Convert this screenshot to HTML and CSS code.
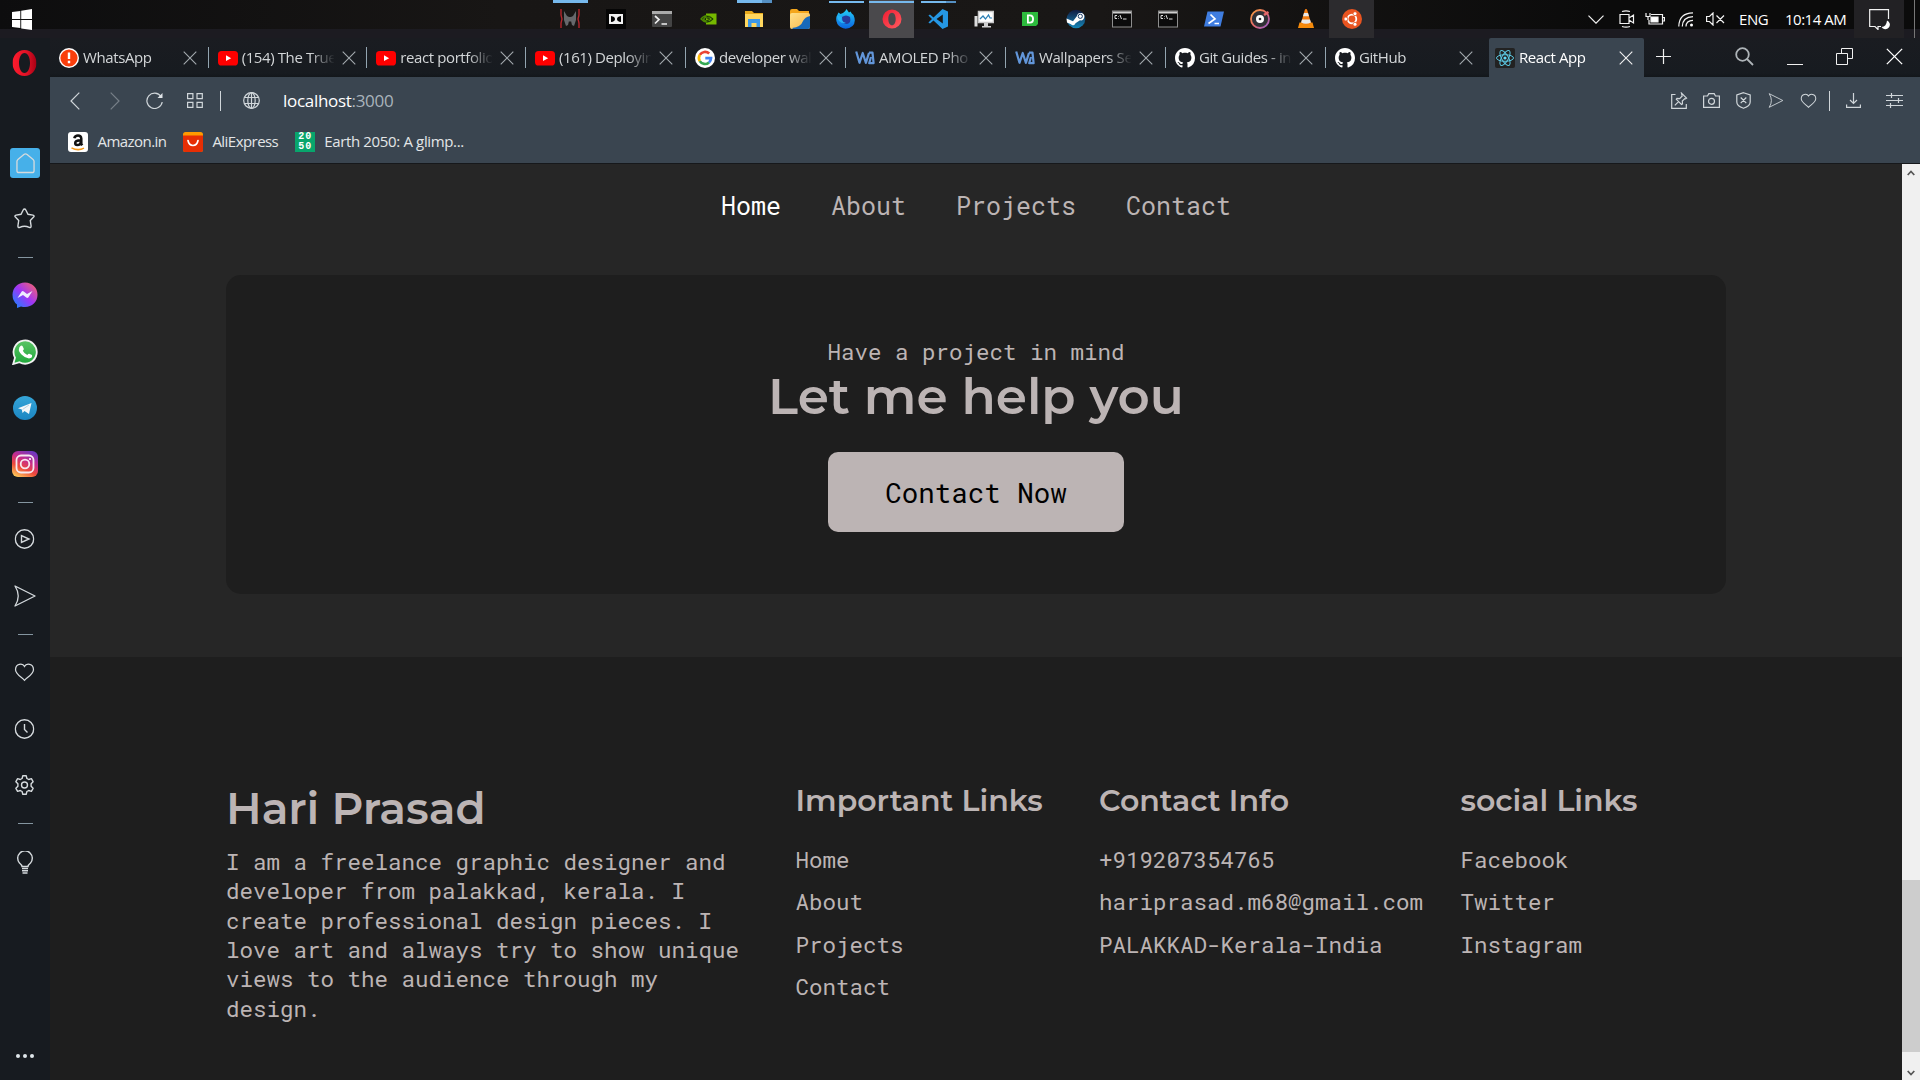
FILE: index.html
```html
<!DOCTYPE html>
<html lang="en">
<head>
<meta charset="utf-8">
<title>React App</title>
<link rel="stylesheet" href="styles.css">
</head>
<body>
<svg class="defs" aria-hidden="true">
  <defs>
    <linearGradient id="gMsg" x1="0" y1="1" x2="1" y2="0"><stop offset="0" stop-color="#0a8cff"/><stop offset=".5" stop-color="#a035f5"/><stop offset="1" stop-color="#ff6a5c"/></linearGradient>
    <linearGradient id="gWa" x1="0" y1="0" x2="0" y2="1"><stop offset="0" stop-color="#5bc466"/><stop offset="1" stop-color="#1fa83a"/></linearGradient>
    <linearGradient id="gTg" x1="0" y1="0" x2="0" y2="1"><stop offset="0" stop-color="#35a5d8"/><stop offset="1" stop-color="#1c86c2"/></linearGradient>
    <linearGradient id="gIg" x1=".2" y1="1" x2=".7" y2="0"><stop offset="0" stop-color="#fdc95a"/><stop offset=".35" stop-color="#ee4a3a"/><stop offset=".65" stop-color="#c52c8c"/><stop offset="1" stop-color="#7038c0"/></linearGradient>
    <linearGradient id="gOpera" x1="0" y1="0" x2="1" y2="0"><stop offset="0" stop-color="#ff1b2d"/><stop offset=".6" stop-color="#e01226"/><stop offset="1" stop-color="#a70014"/></linearGradient>
    <linearGradient id="gOperaTask" x1="0" y1="0" x2="1" y2="1"><stop offset="0" stop-color="#f01c32"/><stop offset="1" stop-color="#ff5c60"/></linearGradient>
    <linearGradient id="gFire" x1="0" y1="0" x2="0" y2="1"><stop offset="0" stop-color="#25d0f8"/><stop offset="1" stop-color="#0a63e0"/></linearGradient>
    <linearGradient id="gSteam" x1="0" y1="0" x2="0" y2="1"><stop offset="0" stop-color="#101a40"/><stop offset="1" stop-color="#1587b8"/></linearGradient>
    <linearGradient id="gDisc" x1="0" y1="0" x2="1" y2="1"><stop offset="0" stop-color="#f6a03c"/><stop offset=".5" stop-color="#e5696b"/><stop offset="1" stop-color="#8f5bd0"/></linearGradient>
    <linearGradient id="gFold" x1="0" y1="0" x2="1" y2="1"><stop offset="0" stop-color="#ffe08a"/><stop offset="1" stop-color="#f7b64a"/></linearGradient>
  </defs>
  <symbol id="close" viewBox="0 0 14 14"><path d="M.7.7 13.3 13.3M13.3.7.7 13.3" fill="none" stroke="currentColor" stroke-width="1.1"/></symbol>
  <symbol id="yt" viewBox="0 0 20 20"><rect y="3" width="20" height="14.5" rx="3.6" fill="#f00"/><path d="M8 7.3v5.8l5.2-2.9z" fill="#fff"/></symbol>
  <symbol id="wabyss" viewBox="0 0 20 20"><path d="M1.200 3.500 4.500 14.800 7.700 5 10.900 14.800 14 4.800M14 4.600h3.500L18.600 15.200H14.200L16 9" fill="none" stroke="#6296da" stroke-width="2.200" stroke-linejoin="round"/></symbol>
  <symbol id="github" viewBox="0 0 16 16"><path fill="#fff" d="M8 0C3.58 0 0 3.58 0 8c0 3.54 2.29 6.53 5.47 7.59.4.07.55-.17.55-.38 0-.19-.01-.82-.01-1.49-2.01.37-2.53-.49-2.69-.94-.09-.23-.48-.94-.82-1.13-.28-.15-.68-.52-.01-.53.63-.01 1.08.58 1.23.82.72 1.21 1.87.87 2.33.66.07-.52.28-.87.51-1.07-1.78-.2-3.64-.89-3.64-3.95 0-.87.31-1.59.82-2.15-.08-.2-.36-1.02.08-2.12 0 0 .67-.21 2.2.82.64-.18 1.32-.27 2-.27s1.36.09 2 .27c1.53-1.04 2.2-.82 2.2-.82.44 1.1.16 1.92.08 2.12.51.56.82 1.27.82 2.15 0 3.07-1.87 3.75-3.65 3.95.29.25.54.73.54 1.48 0 1.07-.01 1.93-.01 2.2 0 .21.15.46.55.38A8.01 8.01 0 0 0 16 8c0-4.42-3.58-8-8-8z"/></symbol>
  <symbol id="heart" viewBox="0 0 22 22"><path d="M11 4.6C9 .9 1.6 1.600 1.600 8c0 4.700 7 8.300 9.400 11.200C13.400 16.300 20.400 12.700 20.400 8 20.400 1.600 13 .9 11 4.600z" fill="none" stroke="currentColor" stroke-width="1.300"/></symbol>
  <symbol id="plane" viewBox="0 0 22 22"><path d="M1 1 21 11 1 21Q7.500 11 1 1z" fill="none" stroke="currentColor" stroke-width="1.300" stroke-linejoin="round"/></symbol>
  <symbol id="cmd" viewBox="0 0 20 20"><rect x=".5" y="2" width="19" height="16" fill="#0b0b0b" stroke="#8d8d8d"/><path d="M1 3.500h18" stroke="#cfcfcf" stroke-width="2"/><path d="M5 6.500H3v3h2M6.500 7v.6M6.500 9v.6M8 6l1.500 4M11 10h3.500" stroke="#ddd" fill="none"/></symbol>
</svg>

<header class="taskbar">
  <svg class="winlogo" viewBox="0 0 20 21"><path fill="#fff" d="M0 3 8.300 1.900V9.900H0zM9.200 1.700 20 0V9.900H9.200zM0 10.900H8.300V19.100L0 18zM9.200 10.900H20V21L9.200 19.400z"/></svg>
  <ul class="tasks">
    <li class="task open"><svg viewBox="0 0 20 20"><path d="M1 0v6l1 4-1 4v5M19 0v6l-1 4 1 4v5" stroke="#b3262c" stroke-width="1.400" fill="none"/><path d="M4 2l3 5 2 1h2l2-1 3-5v9l-2 6-2-1-1-4-1 1-1-1-1 4-2 1-2-6z" fill="#66686b"/></svg></li>
    <li class="task"><svg viewBox="0 0 20 20"><rect width="20" height="20" fill="#050505"/><path fill-rule="evenodd" fill="#f2f2f2" d="M3 5h14v10H3zM5 7v6q4-.5 4-3T5 7zM15 7v6q-4-.5-4-3t4-3z"/></svg></li>
    <li class="task"><svg viewBox="0 0 20 20"><rect y="2" width="20" height="16" rx="1" fill="#444"/><path d="M0 2h20v3H0z" fill="#aaa"/><path d="M3 7l4 3.500-4 4M9.500 15h5.500" stroke="#eee" stroke-width="1.700" fill="none"/></svg></li>
    <li class="task"><svg viewBox="0 0 20 20"><path d="M8 4.500h10.500v11H8z" fill="#76b900"/><path d="M3 10q5-6.500 12 0-6 6.500-12 0zM5.500 10.200q3-4 6.500 0-3 3.500-6.500 0z" fill="none" stroke="#4d8a00" stroke-width="1.300"/><path d="M8.500 7.400q4 0 6.500 2.600-3 3-6.500 3M8.500 9q2 0 3 1-1 1.500-3 1.500" fill="none" stroke="#1c3604" stroke-width="1"/></svg></li>
    <li class="task open stacked"><svg viewBox="0 0 20 20"><path d="M1 2h7l2 2h9v14H1z" fill="#e7a91c"/><path d="M1 5h18v13H1z" fill="#ffd75e"/><path d="M4 10h12v8h-3.500v-4h-5v4H4z" fill="#3b98e8"/></svg></li>
    <li class="task"><svg viewBox="0 0 20 20"><path d="M0 2q0-2 2-2h5l2 2h10v5H0z" fill="#f4a61d"/><rect y="4" width="20" height="16" rx="2" fill="url(#gFold)"/><path d="M2 19q9-1 11-7 2-4 7-5v11q0 2-2 2H3z" fill="#1769ba"/></svg></li>
    <li class="task open lower"><svg viewBox="0 0 20 20"><path d="M10.500 0q1.500 2 2.500 3.500l1.500-1q1 2 3 3.500 3 7-1 11-6 5-12 1-5.500-4-4-10.500L2.500 3.500 4.500 5 7 4q2.500-1.500 3.500-4z" fill="url(#gFire)"/><path d="M6 8q4-3 8 0 1.500 6-3 7-5 0-5-7z" fill="#273a9c"/><path d="M1 7q1 8 9 7-6-2-4-6L3 7z" fill="#27b4f5"/></svg></li>
    <li class="task open lower current"><svg viewBox="0 0 20 20"><path fill-rule="evenodd" fill="url(#gOperaTask)" d="M10 .5a9.500 9.500 0 1 0 0 19 9.500 9.500 0 0 0 0-19zm0 3.200c2.300 0 3.700 2.900 3.700 6.300s-1.400 6.300-3.700 6.300S6.300 13.400 6.300 10 7.700 3.700 10 3.700z"/></svg></li>
    <li class="task open lower stacked"><svg viewBox="0 0 20 20"><path d="M14.500 0 20 2.500v15L14.500 20 5.500 11.500 2 14.500.4 13.500 4 10 .4 6.500 2 5.500l3.500 3zM14.800 5.500 8.500 10l6.300 4.500z" fill="#2597e3" fill-rule="evenodd"/></svg></li>
    <li class="task"><svg viewBox="0 0 20 20"><path d="M4.500 2.500h15v11h-15z" fill="#fff" stroke="#c9c9c9" stroke-width="1.500"/><path d="M10 14h4v3h3v1.500H8V17h2z" fill="#cfcfcf"/><path d="M.5 7h3v10.500h-3z" fill="#dcdcdc"/><path d="M6 10l3-3 2.500 3 3-4 1.500 3h2" fill="none" stroke="#2a7fb5" stroke-width="1.200"/></svg></li>
    <li class="task"><svg viewBox="0 0 20 20"><path d="M2 3h16v12l-2 2H2z" fill="#2dbb3d"/><path fill-rule="evenodd" d="M7 5.500h3q4 0 4 4.500t-4 4.500H7zM8.800 7.300v5.400h1q2.300 0 2.300-2.700t-2.300-2.700z" fill="#fff"/></svg></li>
    <li class="task"><svg viewBox="0 0 20 20"><circle cx="10" cy="10" r="9.300" fill="url(#gSteam)"/><path d="M.5 9.500 7 12.300l4-5.300a3.700 3.700 0 1 1 3 4.300l-4.500 3a2.600 2.600 0 0 1-4.500 1L1 13.500z" fill="#fff"/><circle cx="14.300" cy="7.300" r="2.100" fill="none" stroke="#173a66"/></svg></li>
    <li class="task"><svg viewBox="0 0 20 20"><use href="#cmd"/></svg></li>
    <li class="task"><svg viewBox="0 0 20 20"><use href="#cmd"/></svg></li>
    <li class="task"><svg viewBox="0 0 20 20"><path d="M3.500 2.500H20L16.500 17.500H0z" fill="#3f7de0"/><path d="M6.500 5.500 11 10l-6.500 4.500M10.500 14.500h4.500" stroke="#fff" stroke-width="1.700" fill="none"/></svg></li>
    <li class="task"><svg viewBox="0 0 20 20"><circle cx="10" cy="10" r="9" fill="#303036" stroke="url(#gDisc)" stroke-width="1.800"/><circle cx="10" cy="10" r="4" fill="#fff"/><circle cx="10" cy="10" r="1.300" fill="#303036"/><path d="M14 6l4.500-3" stroke="#e5696b" stroke-width="2.400"/></svg></li>
    <li class="task"><svg viewBox="0 0 20 20"><path d="M3.500 13.500h13l1.500 5.500H2z" fill="#f58a0b"/><path d="M10 0q1 0 1.300 1.200L15 14q-5 3-10 0L8.700 1.200Q9 0 10 0z" fill="#f47e12"/><path d="M8 4h4l1 3.300H7zM6 10.500h8l.9 3q-4.900 2.500-9.800 0z" fill="#e9e9e9"/></svg></li>
    <li class="task idle"><svg viewBox="0 0 20 20"><circle cx="10" cy="10" r="10" fill="#e95420"/><circle cx="10" cy="10" r="4.300" fill="none" stroke="#fff" stroke-width="1.800"/><g fill="#fff" stroke="#e95420" stroke-width=".8"><circle cx="3.900" cy="10" r="2"/><circle cx="13" cy="4.700" r="2"/><circle cx="13" cy="15.300" r="2"/></g></svg></li>
  </ul>
  <div class="tray">
    <svg class="t-chev" viewBox="0 0 16 9"><path d="M.5.7 8 8.200 15.500.7"/></svg>
    <svg class="t-meet" viewBox="0 0 16 18"><path d="M1 4.500h9v9H1zM10 8l4.500-3v8L10 10M3 1.500Q7 .2 11 1.500M3 16.500q4 1.300 8 0"/></svg>
    <svg class="t-bat" viewBox="0 0 20 13"><path d="M6 2.500h11.500v9.500H4V8M18 5.500h1.400v3.500H18M1 1v3.500h4V1M3 4.500V8"/><path d="M6 5h7v5H6z" fill="#fff"/></svg>
    <svg class="t-wifi" viewBox="0 0 16 15"><path d="M.8 14.500Q1 1 15 .8M4.300 14.500Q4.500 5 15 4.600M8 14.500Q8 8.500 15 8.300"/><circle cx="13.500" cy="13" r="1.500" fill="#fff" stroke="none"/></svg>
    <svg class="t-vol" viewBox="0 0 19 14"><path d="M.6 4.500h2.900L7 1v12L3.500 9.500H.6zM10.500 3.500l7.500 7.500M18 3.500 10.500 11"/></svg>
    <span class="lang">ENG</span>
    <span class="clock">10:14 AM</span>
    <span class="notif"><svg viewBox="0 0 21 21"><path d="M12 17.500H9v3L6 17.500H.7V.7H19.500V10"/><path d="M18 11.500a4.500 4.500 0 1 1-5.500 6.500q5-.5 5.500-6.500z" fill="#fff" stroke="none"/></svg></span>
    <i class="peek"></i>
  </div>
</header>

<div class="browser">
  <aside class="sidebar">
    <svg class="opera" viewBox="0 0 24 26"><path fill-rule="evenodd" fill="url(#gOpera)" d="M12 0C5 0 0 5.700 0 13s5 13 12 13 12-5.700 12-13S19 0 12 0zm0 3c3.400 0 5.500 4.600 5.500 10S15.400 23 12 23s-5.500-4.600-5.500-10S8.600 3 12 3z"/></svg>
    <span class="speed"><svg viewBox="0 0 20 22"><path d="M8.300 1.500 2 6.700Q1 7.500 1 9v9.500Q1 20.500 3 20.500h14q2 0 2-2V9q0-1.500-1-2.300L11.700 1.500Q10 .3 8.300 1.500z"/></svg></span>
    <svg class="si star" viewBox="0 0 22 21"><path d="M11 1q.8 0 1.300 1L14.500 6.300l4.900.8q2 .6.700 2L16.800 12.500l.8 5.500q0 2-1.900 1.400Q11 17 6.300 19.400q-1.900.6-1.900-1.400l.8-5.500L1.900 9.100q-1.300-1.400.7-2L7.500 6.300 9.700 2Q10.200 1 11 1z"/></svg>
    <i class="rule"></i>
    <svg class="si msg" viewBox="0 0 26 26"><path d="M13 .5c7 0 12.500 5.200 12.500 12.200S20 25 13 25q-2 0-4-.6L5 26v-3.500Q.5 19 .5 12.700C.5 5.700 6 .5 13 .5z" fill="url(#gMsg)" stroke="none"/><path d="M5.500 16 9.700 9.500q1-.8 2 0l3.300 2.400 5.500-3L16.300 15.500q-1 .8-2 0L11 13z" fill="#eef" stroke="none"/></svg>
    <svg class="si wa" viewBox="0 0 26 26"><path d="M1.200 25 3 18.700A11.600 11.600 0 1 1 7.500 23.200z" fill="url(#gWa)" stroke="#f2f2f2" stroke-width="1.800"/><path d="M8.500 7q1-1 2 0l1.300 2.800q.2.800-1 2 1.500 3 4.500 4.300 1.200-1.700 2-1.300l2.700 1.300q.8 3-3 3.500-4-.3-7.500-4T7 10q0-2 1.500-3z" fill="#fff" stroke="none"/></svg>
    <svg class="si tg" viewBox="0 0 24 24"><circle cx="12" cy="12" r="12" fill="url(#gTg)" stroke="none"/><path d="M5 12.300 18.500 7 16 18l-4.500-3-2 2-.7-3.500z" fill="#f4f7f9" stroke="none"/><path d="M9.500 13.500 16 9" stroke="#a9c9dc" stroke-width=".8"/></svg>
    <svg class="si ig" viewBox="0 0 26 26"><rect width="26" height="26" rx="6" fill="url(#gIg)" stroke="none"/><rect x="4.500" y="4.500" width="17" height="17" rx="4.500" stroke="#f6e9f0" stroke-width="1.800"/><circle cx="13" cy="13" r="4.300" stroke="#f6e9f0" stroke-width="1.800"/><circle cx="18" cy="8" r="1.100" fill="#fff" stroke="none"/></svg>
    <i class="rule r2"></i>
    <svg class="si play" viewBox="0 0 20 20"><circle cx="10" cy="10" r="9.200"/><path d="M7 6.500v7l7.500-3.500z"/></svg>
    <svg class="si send"><use href="#plane"/></svg>
    <i class="rule r3"></i>
    <svg class="si hrt"><use href="#heart"/></svg>
    <svg class="si clk" viewBox="0 0 20 20"><circle cx="10" cy="10" r="9.200"/><path d="M10 5v5.500l3 3"/></svg>
    <svg class="si gear" viewBox="0 0 20 20"><circle cx="10" cy="10" r="3"/><path d="M8.300.8h3.400l.7 2.700 1.800 1 2.700-.8 1.700 3-2 2v2.600l2 2-1.700 3-2.700-.8-1.800 1-.7 2.700H8.300l-.7-2.700-1.800-1-2.700.8-1.700-3 2-2V8.700l-2-2 1.700-3 2.700.8 1.800-1z" stroke-linejoin="round"/></svg>
    <i class="rule r4"></i>
    <svg class="si bulb" viewBox="0 0 18 24"><path d="M6 15.500Q6 14 3.500 12A7.300 7.300 0 1 1 14.500 12Q12 14 12 15.500z"/><path d="M6 17.500h6M6 19.700h6M6.500 22h5" stroke-width="1.400"/></svg>
    <span class="dots"><i></i><i></i><i></i></span>
  </aside>

  <div class="window">
    <div class="tabs">
      <div class="tab narrow"><svg class="fav" viewBox="0 0 20 20"><circle cx="10" cy="10" r="10" fill="#fff"/><circle cx="10" cy="10" r="8.600" fill="#fa3e0c"/><path d="M8.800 4.500h2.400v6.500H8.800zM8.800 12.800h2.400v2.400H8.800z" fill="#fff"/></svg><span class="name">WhatsApp</span><svg class="x"><use href="#close"/></svg></div>
      <div class="tab narrow"><svg class="fav"><use href="#yt"/></svg><span class="name">(154) The True</span><svg class="x"><use href="#close"/></svg></div>
      <div class="tab narrow"><svg class="fav"><use href="#yt"/></svg><span class="name">react portfolio</span><svg class="x"><use href="#close"/></svg></div>
      <div class="tab"><svg class="fav"><use href="#yt"/></svg><span class="name">(161) Deployin</span><svg class="x"><use href="#close"/></svg></div>
      <div class="tab"><svg class="fav" viewBox="0 0 20 20"><circle cx="10" cy="10" r="10" fill="#fff"/><g fill="none" stroke-width="2.700"><path d="M14.200 5.600A6.100 6.100 0 0 0 4.800 6.900" stroke="#ea4335"/><path d="M4.800 6.900a6.100 6.100 0 0 0 0 6.200" stroke="#fbbc05"/><path d="M4.800 13.100a6.100 6.100 0 0 0 9.200 1.400" stroke="#34a853"/><path d="M14 14.500a6.100 6.100 0 0 0 2-4.300h-5.700" stroke="#4285f4"/></g></svg><span class="name">developer wal</span><svg class="x"><use href="#close"/></svg></div>
      <div class="tab"><svg class="fav"><use href="#wabyss"/></svg><span class="name">AMOLED Pho</span><svg class="x"><use href="#close"/></svg></div>
      <div class="tab"><svg class="fav"><use href="#wabyss"/></svg><span class="name">Wallpapers Se</span><svg class="x"><use href="#close"/></svg></div>
      <div class="tab"><svg class="fav"><use href="#github"/></svg><span class="name">Git Guides - in</span><svg class="x"><use href="#close"/></svg></div>
      <div class="tab last"><svg class="fav"><use href="#github"/></svg><span class="name">GitHub</span><svg class="x"><use href="#close"/></svg></div>
      <div class="tab active"><svg class="fav" viewBox="0 0 20 20"><rect width="20" height="20" rx="2" fill="#222"/><g fill="none" stroke="#5cc9e4"><ellipse cx="10" cy="10" rx="8.500" ry="3.300"/><ellipse cx="10" cy="10" rx="8.500" ry="3.300" transform="rotate(60 10 10)"/><ellipse cx="10" cy="10" rx="8.500" ry="3.300" transform="rotate(120 10 10)"/></g><circle cx="10" cy="10" r="1.600" fill="#61dafb"/></svg><span class="name">React App</span><svg class="x"><use href="#close"/></svg></div>
      <svg class="plus" viewBox="0 0 15 15"><path d="M7.500 0v15M0 7.500h15"/></svg>
      <div class="controls">
        <svg class="c-search" viewBox="0 0 19 19"><circle cx="7.500" cy="7.500" r="6.300"/><path d="M12 12l6 6"/></svg>
        <svg class="c-min" viewBox="0 0 16 16"><path d="M0 15.500h16"/></svg>
        <svg class="c-max" viewBox="0 0 17 17"><path d="M.5 5.500h11v11H.500zM5.500 5.500V.500h11v10h-5"/></svg>
        <svg class="c-close"><use href="#close"/></svg>
      </div>
    </div>

    <div class="toolbar">
      <svg class="back" viewBox="0 0 10 18"><path d="M9.300.7 1 9l8.300 8.300"/></svg>
      <svg class="fwd" viewBox="0 0 10 18"><path d="M.7.7 9 9 .7 17.300"/></svg>
      <svg class="reload" viewBox="0 0 17 17"><path d="M15 4.500A7.700 7.700 0 1 0 16.200 10"/><path d="M16.500 1v5h-5z" fill="#dfe4e7" stroke="none"/></svg>
      <svg class="grid" viewBox="0 0 16 15"><path d="M.6.6h5.300v5H.6zM10 .6h5.300v5H10zM.6 9.400h5.300v5H.6zM10 9.400h5.300v5H10z"/></svg>
      <i class="bar"></i>
      <svg class="globe" viewBox="0 0 17 17"><circle cx="8.500" cy="8.500" r="7.800"/><ellipse cx="8.500" cy="8.500" rx="3.700" ry="7.800"/><path d="M1.500 5.500h14M1.500 11.500h14M8.500.5v16"/></svg>
      <span class="url">localhost<span class="port">:3000</span></span>
      <div class="actions">
        <svg class="a-pin" viewBox="0 0 17 17"><path d="M4.500 2.500H.7v13.800h14.600V12M10.500 1.200l5 5-1.200.6-.5-.2-2.500 2.500.2 2.800-1 .6L5.300 7.300l.7-1 2.700.3L11.200 4l-.2-.6zM7.600 9.600l-3.800 3.800"/></svg>
        <svg class="a-cam" viewBox="0 0 17 15"><path d="M.6 3H4.500l1.300-2.300h5.400L12.500 3h3.900v11.300H.6z"/><circle cx="8.500" cy="8.300" r="3"/></svg>
        <svg class="a-shield" viewBox="0 0 15 17"><path d="M7.500.7 14.200 3v7q0 4-6.700 6.300Q.8 14 .8 10V3zM4.700 5.500l5.600 5.600M10.300 5.500 4.700 11.100"/></svg>
        <svg class="a-send"><use href="#plane"/></svg>
        <svg class="a-heart"><use href="#heart"/></svg>
        <i class="bar"></i>
        <svg class="a-down" viewBox="0 0 15 15"><path d="M7.500 0v10.500M4 7l3.500 3.500L11 7M.6 11.500v2.900h13.800v-2.900"/></svg>
        <svg class="a-tune" viewBox="0 0 17 15"><path d="M0 2.500h17M0 7.500h17M0 12.500h17M5.500 0v5M12.500 5v5M4.500 10v5"/></svg>
      </div>
    </div>

    <div class="bookmarks">
      <a class="bm"><svg viewBox="0 0 20 20"><rect width="20" height="20" rx="3" fill="#fff"/><path d="M6.300 6.200Q7 3.500 10 3.500t3.300 3V12l1 1.300M13 8.200q-5.800 0-5.800 2.900 0 2 2 2 3.500 0 3.800-4" fill="none" stroke="#111" stroke-width="2.500"/><path d="M3.500 15.800q6.500 3.500 12.500.3" fill="none" stroke="#f79a1a" stroke-width="1.500"/></svg><span>Amazon.in</span></a>
      <a class="bm"><svg viewBox="0 0 20 20"><rect width="20" height="20" rx="2.500" fill="#ff9a00"/><path d="M0 3.500h20V18q0 2-2 2H2q-2 0-2-2z" fill="#e62e04"/><path d="M5 8.500q1 5 5 5t5-5" fill="none" stroke="#fff" stroke-width="1.700" stroke-linecap="round"/></svg><span>AliExpress</span></a>
      <a class="bm"><span class="e2050"><b>20</b><b>50</b></span><span class="wide">Earth 2050: A glimp...</span></a>
    </div>

    <div class="viewport">
      <div class="page">
        <section class="contact">
          <nav class="nav">
            <a class="on">Home</a><a>About</a><a>Projects</a><a>Contact</a>
          </nav>
          <div class="banner">
            <p>Have a project in mind</p>
            <h2>Let me help you</h2>
            <a class="btn">Contact Now</a>
          </div>
        </section>
        <footer class="footer">
          <div class="about">
            <h1>Hari Prasad</h1>
            <p>I am a freelance graphic designer and developer from palakkad, kerala. I create professional design pieces. I love art and always try to show unique views to the audience through my design.</p>
          </div>
          <div class="links"><h3>Important Links</h3><a>Home</a><a>About</a><a>Projects</a><a>Contact</a></div>
          <div class="links"><h3>Contact Info</h3><a>+919207354765</a><a>hariprasad.m68@gmail.com</a><a>PALAKKAD-Kerala-India</a></div>
          <div class="links"><h3>social Links</h3><a>Facebook</a><a>Twitter</a><a>Instagram</a></div>
        </footer>
      </div>
      <div class="scroll">
        <svg viewBox="0 0 8 6"><path d="M.7 5 4 1.500 7.300 5"/></svg>
        <i class="thumb"></i>
        <svg viewBox="0 0 8 6"><path d="M.7 1 4 4.500 7.300 1"/></svg>
      </div>
    </div>
  </div>
</div>
</body>
</html>
```
FILE: styles.css
```css
* { box-sizing: border-box; }
body {
  margin: 0;
  width: 1920px;
  height: 1080px;
  overflow: hidden;
  display: flex;
  flex-direction: column;
  background: #171b20;
  color: #e3e5e7;
  font: 15px/20px "Open Sans", "Noto Sans", sans-serif;
  letter-spacing: -0.4px;
}
h1, h2, h3, p, ul { margin: 0; padding: 0; }
i { display: block; }
svg { display: block; flex: none; }
.defs { position: absolute; width: 0; height: 0; }

/* Taskbar */
.taskbar {
  height: 38px;
  flex: none;
  display: flex;
  align-items: flex-start;
  background: linear-gradient(#1c1b2100 29px, #1c1b21 29px), linear-gradient(90deg, #0d0d0e, #181615 500px, #191716 1100px, #0b0b0b 1600px);
}
.winlogo { width: 20px; height: 21px; margin: 9px 0 0 12px; }
.tasks { list-style: none; display: flex; margin-left: 515px; width: 828px; flex: none; }
.task { width: 45px; height: 38px; margin-right: 1px; padding: 9px 0 0 12.5px; background-repeat: no-repeat; flex: none; }
.task svg { width: 20px; height: 20px; }
.open { background-image: linear-gradient(#76b9ed, #76b9ed); background-size: 35px 3px; background-position: 6px 0; }
.open.stacked { background-image: linear-gradient(90deg, #76b9ed 25px, #5590c3 25px); }
.open.lower { background-size: 35px 2px; background-position: 6px 1px; }
.open.current { background-color: #4a494c; background-size: 45px 2px; background-position: 0 1px; }
.idle { background-color: #2c2b2e; }
.tray { display: flex; width: 331px; margin-left: 213px; flex: none; color: #fff; }
.tray svg { fill: none; stroke: #f2f2f2; stroke-width: 1.2; }
.t-chev { width: 16px; height: 9px; margin-top: 15px; }
.t-meet { width: 16px; height: 18px; margin: 10px 0 0 15px; }
.t-bat { width: 20px; height: 13px; margin: 12px 0 0 10px; }
.t-wifi { width: 16px; height: 15px; margin: 12px 0 0 13px; }
.t-vol { width: 19px; height: 14px; margin: 12px 0 0 12px; }
.lang { margin: 9px 0 0 14px; width: 31px; white-space: nowrap; }
.clock { margin: 9px 0 0 15px; width: 69px; white-space: nowrap; letter-spacing: -0.5px; }
.notif { width: 50px; height: 38px; background: #222124; padding: 9px 0 0 15px; }
.notif svg { width: 21px; height: 21px; }
.peek { width: 1px; height: 38px; background: #777; margin-left: 10px; }

.browser { flex: 1; min-height: 0; display: flex; }

/* Sidebar */
.sidebar {
  width: 50px;
  flex: none;
  display: flex;
  flex-direction: column;
  align-items: center;
  color: #d5dadd;
}
.opera { width: 24px; height: 26px; margin: 12px 1px 0 0; transform: translateX(-.5px); }
.speed { width: 30px; height: 30px; margin-top: 72px; border-radius: 3px; background: #46b0e9; display: flex; justify-content: center; padding-top: 5px; }
.speed svg { width: 19px; height: 21px; }
.speed path, .si { fill: none; stroke: currentColor; stroke-width: 1.4; }
.star { width: 22px; height: 21px; margin-top: 30px; }
.rule { width: 15px; height: 1px; margin: 27.5px 0 0 1px; background: #8495a0; }
.msg { width: 26px; height: 26px; margin-top: 24.5px; }
.wa { width: 26px; height: 26px; margin-top: 31px; }
.tg { width: 24px; height: 24px; margin-top: 31px; }
.ig { width: 26px; height: 26px; margin-top: 30.5px; }
.r2 { margin-top: 25px; }
.play { width: 20px; height: 20px; margin-top: 26.5px; }
.send { width: 22px; height: 22px; margin-top: 36px; }
.r3 { margin-top: 27px; }
.hrt { width: 22px; height: 21px; margin-top: 27px; }
.clk { width: 20px; height: 20px; margin-top: 35.5px; }
.gear { width: 20px; height: 20px; margin-top: 36px; }
.r4 { margin-top: 28.5px; }
.bulb { width: 18px; height: 24px; margin-top: 26.5px; }
.star, .play, .hrt, .clk, .gear { transform: translateX(-.5px); }
.dots { display: flex; gap: 3px; margin-top: auto; margin-bottom: 22px; }
.dots i { width: 4px; height: 4px; border-radius: 50%; background: #dfe6ea; }

.window { flex: 1; min-width: 0; display: flex; flex-direction: column; }

/* Tabs */
.tabs {
  height: 39px;
  flex: none;
  display: flex;
  background: linear-gradient(#1a1c21, #171b20 90%, #13171b);
}
.tab {
  width: 160px;
  flex: none;
  display: flex;
  align-items: center;
  padding-left: 9px;
  color: #d3d6d8;
  background: linear-gradient(#93a5b1, #93a5b1) no-repeat right 9px / 1px 21px;
}
.tab.narrow { width: 158.67px; }
.tab.last { background: none; }
.fav { width: 20px; height: 20px; }
.name {
  width: 92px;
  margin: -2px 6px 0 4px;
  overflow: hidden;
  white-space: nowrap;
  -webkit-mask-image: linear-gradient(90deg, #000 68px, transparent 93px);
  mask-image: linear-gradient(90deg, #000 68px, transparent 93px);
}
.x { width: 14px; height: 14px; color: #a3a9ae; margin-left: 2px; }
.tab.active { background: #3a4550; border-radius: 2px 2px 0 0; width: 155px; margin-left: 3px; padding-left: 6px; color: #fff; }
.tab.active .x { color: #f2f2f2; }
.plus { width: 15px; height: 15px; margin: 11px 0 0 12px; stroke: #f0f0f0; stroke-width: 1.2; }
.controls { display: flex; margin-left: auto; color: #fff; }
.controls svg { fill: none; stroke: #f0f0f0; }
.c-search { width: 19px; height: 19px; margin: 9px 33px 0 0; stroke-width: 1.8; }
.controls .c-search { stroke: #aeb4b8; }
.c-min { width: 16px; height: 16px; margin: 11px 33px 0 0; }
.c-max { width: 17px; height: 17px; margin: 10px 33px 0 0; }
.c-close { width: 17px; height: 17px; margin: 10px 17px 0 0; }

/* Address bar */
.toolbar { height: 47px; flex: none; display: flex; align-items: center; background: #3a4550; color: #d0d6da; }
.toolbar svg { fill: none; stroke: #d0d6da; stroke-width: 1.2; }
.back { width: 10px; height: 18px; margin-left: 20px; }
.fwd { width: 10px; height: 18px; margin-left: 30px; opacity: .4; }
.reload { width: 17px; height: 17px; margin-left: 26px; }
.grid { width: 16px; height: 15px; margin-left: 24px; }
.bar { width: 1px; height: 20px; background: #d0d6da; }
.toolbar > .bar { margin-left: 17px; }
.globe { width: 17px; height: 17px; margin-left: 22px; }
.url { margin-left: 23px; font-size: 17px; line-height: 22px; letter-spacing: -0.3px; color: #fff; }
.port { color: #a9b3bb; }
.actions { display: flex; align-items: center; margin-left: auto; }
.a-pin { width: 17px; height: 17px; margin-right: 15px; }
.a-cam { width: 17px; height: 15px; margin-right: 16px; }
.a-shield { width: 15px; height: 17px; margin-right: 17px; }
.a-send { width: 16px; height: 15px; margin-right: 16px; }
.a-heart { width: 17px; height: 18px; margin-right: 12px; }
.a-down { width: 15px; height: 15px; margin: 0 25px 0 16px; }
.a-tune { width: 17px; height: 15px; margin-right: 17px; }

.bookmarks { height: 40px; flex: none; display: flex; gap: 16.5px; padding: 8px 0 0 18px; align-items: flex-start; background: #3a4550; border-bottom: 1px solid #16181b; }
.bm { display: flex; gap: 9.5px; height: 20px; }
.bm svg { width: 20px; height: 20px; }
.bm span { margin-top: -1px; white-space: nowrap; letter-spacing: -0.55px; }
.bm .wide { letter-spacing: -0.35px; }
.bm .e2050 { display: grid; width: 20px; height: 20px; margin-top: 0; background: #08a56c; color: #fff; font: 700 10px/10px "Liberation Mono", monospace; letter-spacing: 1px; text-align: center; padding-left: 1px; }

/* Web page */
.viewport { flex: 1; min-height: 0; display: flex; }
.page {
  width: 1852px;
  flex: none;
  display: flex;
  flex-direction: column;
  background: #262626;
  color: #bcb4b4;
  font: 22.5px/30px "Roboto Mono", "DejaVu Sans Mono", monospace;
  letter-spacing: 0;
}
.contact { height: 493px; flex: none; display: flex; flex-direction: column; align-items: center; }
.nav { display: flex; gap: 50px; margin-top: 25px; font-size: 25px; line-height: 34px; }
.nav .on { color: #fff; }
.banner {
  width: 1500px;
  height: 319px;
  margin-top: 52px;
  padding-top: 61px;
  border-radius: 15px;
  background: #1e1e1e;
  display: flex;
  flex-direction: column;
  align-items: center;
}
h1, h2, h3 { font-family: "Montserrat", "Inter", sans-serif; font-weight: 600; white-space: nowrap; }
h2 { margin-top: 1px; font-size: 50px; line-height: 60px; }
.btn { width: 296px; height: 80px; margin-top: 25px; border-radius: 10px; background: #bcb4b4; color: #000; font-size: 27.5px; line-height: 80px; text-align: center; }
.footer {
  flex: 1;
  display: grid;
  grid-template-columns: 569.5px 303.5px 361.5px 1fr;
  padding: 125px 176px 0;
  background: #1e1e1e;
}
h1 { font-size: 44px; line-height: 52px; }
.about p { width: 520px; margin-top: 13px; line-height: 29.33px; }
.links { display: flex; flex-direction: column; gap: 12.4px; }
h3 { font-size: 30px; line-height: 38px; margin-bottom: 11.5px; }

/* Scrollbar */
.scroll { width: 18px; background: #f0f0f0; display: flex; flex-direction: column; align-items: center; padding: 6px 0 4px; }
.scroll svg { width: 8px; height: 6px; fill: none; stroke: #555; stroke-width: 1.7; }
.thumb { width: 18px; height: 172px; margin-top: auto; margin-bottom: 18px; background: #cdcdcd; }
```
